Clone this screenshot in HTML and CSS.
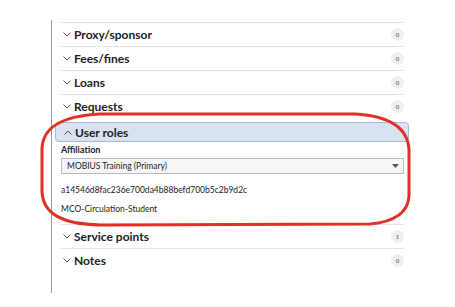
FILE: index.html
```html
<!DOCTYPE html>
<html>
<head>
<meta charset="utf-8">
<link rel="stylesheet" href="styles.css">
</head>
<body>
<div class="page">
  <div class="pane">
    <div class="acc">
      <div class="acc-head"><span class="chev"><svg width="8" height="5" viewBox="0 0 8 5"><path d="M0.5 0.5 L4 4 L7.5 0.5" fill="none" stroke="#555" stroke-width="1"/></svg></span><span class="title">Proxy/sponsor</span><span class="badge">0</span></div>
    </div>
    <div class="acc">
      <div class="acc-head"><span class="chev"><svg width="8" height="5" viewBox="0 0 8 5"><path d="M0.5 0.5 L4 4 L7.5 0.5" fill="none" stroke="#555" stroke-width="1"/></svg></span><span class="title">Fees/fines</span><span class="badge">0</span></div>
    </div>
    <div class="acc">
      <div class="acc-head"><span class="chev"><svg width="8" height="5" viewBox="0 0 8 5"><path d="M0.5 0.5 L4 4 L7.5 0.5" fill="none" stroke="#555" stroke-width="1"/></svg></span><span class="title">Loans</span><span class="badge">0</span></div>
    </div>
    <div class="acc">
      <div class="acc-head"><span class="chev"><svg width="8" height="5" viewBox="0 0 8 5"><path d="M0.5 0.5 L4 4 L7.5 0.5" fill="none" stroke="#555" stroke-width="1"/></svg></span><span class="title">Requests</span><span class="badge">0</span></div>
    </div>
    <div class="acc open">
      <div class="acc-head active"><span class="chev"><svg width="8" height="5" viewBox="0 0 8 5"><path d="M0.5 4.5 L4 1 L7.5 4.5" fill="none" stroke="#555" stroke-width="1"/></svg></span><span class="title">User roles</span></div>
      <div class="acc-body">
        <div class="label">Affiliation</div>
        <div class="select"><span>MOBIUS Training (Primary)</span><svg width="7" height="4" viewBox="0 0 7 4"><path d="M0 0 L7 0 L3.5 4 Z" fill="#555"/></svg></div>
        <div class="line">a14546d8fac236e700da4b88befd700b5c2b9d2c</div>
        <div class="line">MCO-Circulation-Student</div>
      </div>
    </div>
    <div class="acc">
      <div class="acc-head"><span class="chev"><svg width="8" height="5" viewBox="0 0 8 5"><path d="M0.5 0.5 L4 4 L7.5 0.5" fill="none" stroke="#555" stroke-width="1"/></svg></span><span class="title">Service points</span><span class="badge">1</span></div>
    </div>
    <div class="acc last">
      <div class="acc-head"><span class="chev"><svg width="8" height="5" viewBox="0 0 8 5"><path d="M0.5 0.5 L4 4 L7.5 0.5" fill="none" stroke="#555" stroke-width="1"/></svg></span><span class="title">Notes</span><span class="badge">0</span></div>
    </div>
  </div>
  <svg class="annot" width="455" height="307" viewBox="0 0 455 307">
    <path d="M100 114 L355 114 C390 116 408 128 409 150 L409 196 C408 214 392 222 370 224 L100 225 C62 224 42 214 42 190 L42 150 C42 128 60 116 100 114 Z" fill="none" stroke="#e03128" stroke-width="3"/>
  </svg>
</div>
</body>
</html>
```
FILE: styles.css
```css
html, body {
  margin: 0;
  padding: 0;
  background: #fff;
}
.page {
  position: relative;
  width: 455px;
  height: 307px;
  font-family: Lato, "Noto Sans", "Liberation Sans", sans-serif;
  color: #222;
}
.pane {
  position: absolute;
  left: 51px;
  top: 20px;
  width: 353px;
  height: 273px;
  border-left: 1px solid #999;
  box-sizing: border-box;
  padding-left: 9px;
  padding-top: 2px;
}
.acc {
  border-top: 1px solid #e3e3e3;
}
.acc.open {
  border-top: none;
}
.acc-head {
  display: flex;
  align-items: center;
  height: 23px;
  padding-left: 2px;
}
.chev {
  display: flex;
  width: 11px;
}
.title {
  font-weight: 700;
  font-size: 12px;
  flex: 1;
}
.badge {
  width: 13px;
  height: 13px;
  border-radius: 50%;
  background: #efefef;
  color: #777;
  font-size: 6px;
  font-weight: 700;
  display: flex;
  align-items: center;
  justify-content: center;
}
.acc-head.active {
  margin: 4px -5px 0 -6px;
  height: 18px;
  padding-left: 8px;
  background: #d9e3f0;
  border: 1px solid #a9bbd1;
  border-radius: 4px;
}
.acc-body {
  padding: 0 0 10px 0;
  font-size: 8.5px;
}
.label {
  font-weight: 700;
  font-size: 9px;
  margin-top: 2px;
}
.select {
  margin-top: 3px;
  height: 16px;
  border: 1px solid #bbb;
  background: #f6f6f6;
  box-sizing: border-box;
  display: flex;
  align-items: center;
  justify-content: space-between;
  padding: 0 4px 0 5px;
}
.line {
  margin-top: 11px;
  line-height: 10px;
}
.line + .line {
  margin-top: 9px;
}
.annot {
  position: absolute;
  left: 0;
  top: 0;
}
```
